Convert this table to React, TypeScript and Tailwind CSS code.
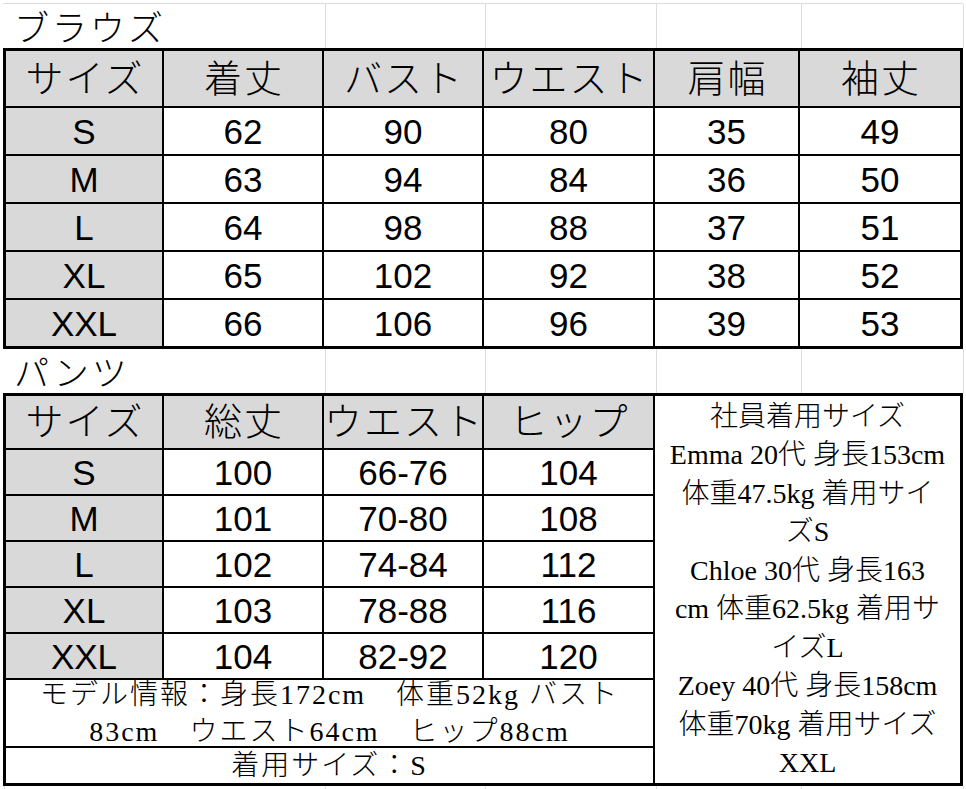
const mincho = "font-['Liberation_Serif','Noto_Sans_CJK_JP',serif] font-light";
const arial = "font-['Liberation_Sans',Arial,sans-serif]";

const blouse = [
  ["S", "62", "90", "80", "35", "49"],
  ["M", "63", "94", "84", "36", "50"],
  ["L", "64", "98", "88", "37", "51"],
  ["XL", "65", "102", "92", "38", "52"],
  ["XXL", "66", "106", "96", "39", "53"],
];

const pants = [
  ["S", "100", "66-76", "104"],
  ["M", "101", "70-80", "108"],
  ["L", "102", "74-84", "112"],
  ["XL", "103", "78-88", "116"],
  ["XXL", "104", "82-92", "120"],
];

const staff = [
  "社員着用サイズ",
  "Emma 20代 身長153cm",
  "体重47.5kg 着用サイ",
  "ズS",
  "Chloe 30代 身長163",
  "cm 体重62.5kg 着用サ",
  "イズL",
  "Zoey 40代 身長158cm",
  "体重70kg 着用サイズ",
  "XXL",
];

function Head({ children }: { children: string }) {
  return (
    <div className={`bg-[#d9d9d9] flex items-center justify-center whitespace-nowrap overflow-visible text-[38px] leading-none tracking-[2px] pl-[2px] text-black ${mincho}`}>
      {children}
    </div>
  );
}

function Cell({ children, gray }: { children: string; gray?: boolean }) {
  return (
    <div
      className={`${gray ? "bg-[#d9d9d9]" : "bg-white"} flex items-center justify-center text-[35px] leading-none text-black ${arial}`}
    >
      {children}
    </div>
  );
}

function TitleRow({ title }: { title: string }) {
  return (
    <div className="grid grid-cols-[321px_160px_171px_145px_163px] h-[44px] ml-[1px]">
      <div className={`flex items-end pl-[10px] pb-[1px] text-[35px] leading-none tracking-[3px] text-black ${mincho}`}>
        {title}
      </div>
      <div className="border-l border-[#dcdcdc]" />
      <div className="border-l border-[#dcdcdc]" />
      <div className="border-l border-[#dcdcdc]" />
      <div className="border-l border-r border-[#dcdcdc]" />
    </div>
  );
}

export default function App() {
  return (
    <div className="w-[966px] h-[789px] bg-white overflow-hidden pt-[3px] pl-[3px]">
      <div className="w-[960px] border-t border-[#dcdcdc]">
        <TitleRow title="ブラウズ" />
      </div>

      <div className="grid grid-cols-[156px_158px_158px_169px_143px_160px] grid-rows-[55px_repeat(5,46px)] gap-[2px] bg-black p-[3px] w-[960px]">
        {["サイズ", "着丈", "バスト", "ウエスト", "肩幅", "袖丈"].map((h) => (
          <Head key={h}>{h}</Head>
        ))}
        {blouse.map((row) =>
          row.map((v, i) => (
            <Cell key={row[0] + i} gray={i === 0}>
              {v}
            </Cell>
          ))
        )}
      </div>

      <TitleRow title="パンツ" />

      <div className="grid grid-cols-[156px_158px_158px_169px_305px] grid-rows-[52px_repeat(5,44px)_66px_35px] gap-[2px] bg-black p-[3px] w-[960px]">
        <div className={`col-start-5 row-start-1 row-span-8 bg-white flex flex-col items-center justify-center text-[28px] leading-[38.5px] text-black pt-[1px] ${mincho}`}>
          {staff.map((l) => (
            <div key={l} className="whitespace-nowrap">
              {l}
            </div>
          ))}
        </div>
        {["サイズ", "総丈", "ウエスト", "ヒップ"].map((h) => (
          <Head key={h}>{h}</Head>
        ))}
        {pants.map((row) =>
          row.map((v, i) => (
            <Cell key={row[0] + i} gray={i === 0}>
              {v}
            </Cell>
          ))
        )}
        <div className={`col-span-4 bg-white flex flex-col items-center justify-center text-[28px] leading-[37px] tracking-[2px] text-black ${mincho}`}>
          <div className="whitespace-nowrap">モデル情報：身長172cm　体重52kg バスト</div>
          <div className="whitespace-nowrap">83cm　ウエスト64cm　ヒップ88cm</div>
        </div>
        <div className={`col-span-4 bg-white flex items-center justify-center text-[28px] leading-none tracking-[2px] text-black ${mincho}`}>
          着用サイズ：S
        </div>
      </div>

      <div className="grid grid-cols-[321px_160px_171px_145px_163px] h-[6px] ml-[1px]">
        <div className="border-l border-[#dcdcdc]" />
        <div className="border-l border-[#dcdcdc]" />
        <div className="border-l border-[#dcdcdc]" />
        <div className="border-l border-[#dcdcdc]" />
        <div className="border-l border-r border-[#dcdcdc]" />
      </div>
    </div>
  );
}
